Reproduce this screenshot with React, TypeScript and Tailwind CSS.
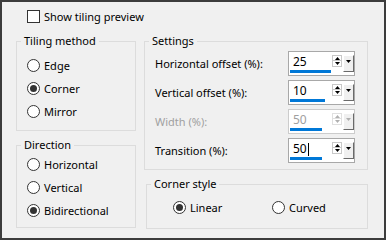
import React from 'react';

const fontClass = "font-['Noto_Sans',sans-serif]";

function Radio({ label, checked, className }: { label: string; checked?: boolean; className?: string }) {
  return (
    <div className={`flex h-[13px] items-center gap-[4px] ${className ?? ''}`}>
      <span className="flex h-[13px] w-[13px] items-center justify-center rounded-full border border-[#333333] bg-white">
        {checked ? <span className="h-[7px] w-[7px] rounded-full bg-[#333333]" /> : null}
      </span>
      <span className="leading-[16px]">{label}</span>
    </div>
  );
}

function Arrow({ up, color }: { up?: boolean; color: string }) {
  return (
    <svg width="5" height="3" viewBox="0 0 5 3">
      <path d={up ? 'M0 3 L2.5 0 L5 3 Z' : 'M0 0 L5 0 L2.5 3 Z'} fill={color} />
    </svg>
  );
}

function Spin({
  value,
  bar,
  disabled,
  caret,
}: {
  value: string;
  bar: number;
  disabled?: boolean;
  caret?: boolean;
}) {
  const arrow = disabled ? '#b0b0b0' : '#000000';
  return (
    <div
      className={`flex h-[25px] w-[67px] border bg-white ${
        disabled ? 'border-[#cccccc]' : 'border-[#a8a8a8]'
      }`}
    >
      <div className="flex flex-1 flex-col pt-[2px]">
        <div
          className={`flex h-[16px] items-center pl-[4px] text-[12px] leading-[16px] ${
            disabled ? 'text-[#a0a0a0]' : 'text-black'
          }`}
        >
          {value}
          {caret ? <span className="ml-[1px] h-[13px] w-[1px] bg-black" /> : null}
        </div>
        <div className="ml-[1px] h-[3px] bg-[#0078d7]" style={{ width: bar }} />
      </div>
      <div className="flex items-start gap-[1px] pt-[3px]">
        <div className="flex flex-col">
          <span
            className={`flex h-[6px] w-[10px] items-center justify-center border ${
              disabled ? 'border-[#e0e0e0]' : 'border-[#c8c8c8]'
            }`}
          >
            <Arrow up color={arrow} />
          </span>
          <span
            className={`flex h-[6px] w-[10px] items-center justify-center border border-t-0 ${
              disabled ? 'border-[#e0e0e0]' : 'border-[#c8c8c8]'
            }`}
          >
            <Arrow color={arrow} />
          </span>
        </div>
        <span className="flex h-[17px] w-[11px] items-start justify-center border-t border-l border-r border-b border-t-white border-l-white border-r-[#6a6a6a] border-b-[#6a6a6a] bg-[#f0f0f0] pt-[4px]">
          <Arrow color={arrow} />
        </span>
      </div>
    </div>
  );
}

function SettingRow({ label, children, disabled }: { label: string; children: React.ReactNode; disabled?: boolean }) {
  return (
    <div className="flex h-[25px] items-center justify-between">
      <span className={`leading-[16px] ${disabled ? 'text-[#a0a0a0]' : ''}`}>{label}</span>
      {children}
    </div>
  );
}

export default function App() {
  return (
    <div
      className={`h-[240px] w-[386px] border-2 border-[#3c3c3c] bg-[#f0f0f0] text-[11px] text-black ${fontClass}`}
    >
      <div className="mt-[8px] flex h-[13px] items-center gap-[4px] pl-[25px]">
        <span className="h-[13px] w-[13px] border border-[#333333] bg-white" />
        <span className="leading-[16px]">Show tiling preview</span>
      </div>

      <div className="mt-[10px] flex gap-[8px] pl-[14px]">
        <div className="flex w-[120px] flex-col gap-[6px]">
          <fieldset className="h-[98px] border border-[#dcdcdc] px-[10px]">
            <legend className="ml-[-6px] px-[3px] leading-[16px]">Tiling method</legend>
            <div className="flex flex-col gap-[10px] pt-[10px]">
              <Radio label="Edge" />
              <Radio label="Corner" checked />
              <Radio label="Mirror" />
            </div>
          </fieldset>
          <fieldset className="h-[91px] border border-[#dcdcdc] px-[10px]">
            <legend className="ml-[-6px] px-[3px] leading-[16px]">Direction</legend>
            <div className="flex flex-col gap-[10px] pt-[5px]">
              <Radio label="Horizontal" />
              <Radio label="Vertical" />
              <Radio label="Bidirectional" checked />
            </div>
          </fieldset>
        </div>

        <div className="flex w-[224px] flex-col gap-[6px]">
          <fieldset className="h-[137px] border border-[#dcdcdc] pl-[10px] pr-[12px]">
            <legend className="ml-[-6px] px-[3px] leading-[16px]">Settings</legend>
            <div className="flex flex-col gap-[4px] pt-[2px]">
              <SettingRow label="Horizontal offset (%):">
                <Spin value="25" bar={41} />
              </SettingRow>
              <SettingRow label="Vertical offset (%):">
                <Spin value="10" bar={35} />
              </SettingRow>
              <SettingRow label="Width (%):" disabled>
                <Spin value="50" bar={32} disabled />
              </SettingRow>
              <SettingRow label="Transition (%):">
                <Spin value="50" bar={32} caret />
              </SettingRow>
            </div>
          </fieldset>
          <fieldset className="ml-[2px] h-[53px] border border-[#dcdcdc] pl-[26px]">
            <legend className="ml-[-22px] px-[3px] leading-[16px]">Corner style</legend>
            <div className="flex items-center pt-[9px]">
              <Radio label="Linear" checked className="w-[99px]" />
              <Radio label="Curved" />
            </div>
          </fieldset>
        </div>
      </div>
    </div>
  );
}
